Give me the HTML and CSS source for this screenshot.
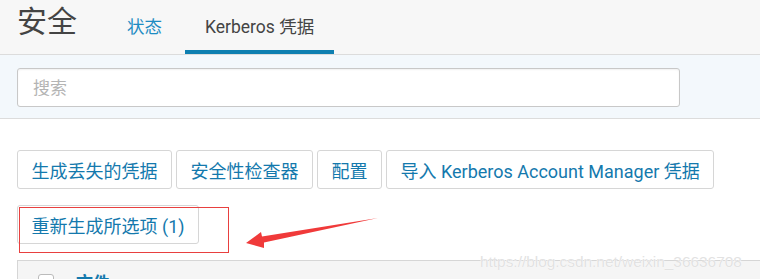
FILE: index.html
```html
<!DOCTYPE html>
<html lang="zh-CN">
<head>
    <meta charset="UTF-8">
    <meta name="viewport" content="width=device-width, initial-scale=1.0">
    <title>安全</title>
    <link rel="stylesheet" href="styles.css">
</head>
<body>
    <div class="header">
        <div class="page-title">安全</div>
        <div class="tabs">
            <div class="tab">状态</div>
            <div class="tab active">Kerberos 凭据</div>
        </div>
    </div>

    <div class="search-bar">
        <input class="search-input" type="text" placeholder="搜索">
    </div>

    <div class="toolbar">
        <div class="btn-row">
            <button class="btn">生成丢失的凭据</button>
            <button class="btn">安全性检查器</button>
            <button class="btn">配置</button>
            <button class="btn">导入 Kerberos Account Manager 凭据</button>
        </div>
        <div class="btn-row second">
            <button class="btn">重新生成所选项 (1)</button>
        </div>
    </div>

    <div class="table-head">
        <span class="checkbox"></span>
        <span class="col-name">文件</span>
    </div>

    <!-- 标注 -->
    <div class="mark-box"></div>
    <svg class="mark-arrow" width="760" height="279" viewBox="0 0 760 279">
        <polygon points="246,243 261,232 262,236.5 378,218 264,242.5 264,248" fill="#f03a3a"></polygon>
    </svg>
    <div class="watermark">https://blog.csdn.net/weixin_36636708</div>
</body>
</html>
```

FILE: styles.css
```css
:root {
    --blue: #1479ad;
    --tab-blue: #1d8cc3;
    --border: #d6d6d6;
    --radius: 3px;
}
body {
    margin: 0;
    background: #fff;
    color: #333;
    font-family: Roboto, "Noto Sans CJK SC", sans-serif;
    overflow: hidden;
    position: relative;
    height: 279px;
}
.header {
    display: flex;
    height: 54px;
    padding-left: 17px;
    background: #f7f7f7;
    border-bottom: 1px solid #dcdcdc;
}
.page-title {
    font-size: 30px;
    line-height: 44px;
    color: #444;
}
.tabs {
    display: flex;
    gap: 3px;
    margin-left: 30px;
}
.tab {
    padding: 4px 20px 0;
    font-size: 17.5px;
    line-height: 46px;
    color: var(--tab-blue);
    border-bottom: 4px solid transparent;
}
.tab.active {
    color: #444;
    border-bottom-color: #0e7fb1;
}
.search-bar {
    padding: 13px 17px 11px;
    background: #f3f8fc;
    border-bottom: 1px solid #dcdcdc;
}
.search-input {
    display: block;
    box-sizing: border-box;
    width: 663px;
    height: 39px;
    padding: 0 15px;
    border: 1px solid #c8c8c8;
    border-radius: var(--radius);
    box-shadow: inset 0 1px 2px rgba(0,0,0,0.06);
    font-family: inherit;
    font-size: 17px;
    outline: none;
}
.search-input::placeholder {
    color: #b4b4b4;
}
.toolbar {
    padding: 31px 17px 0;
}
.btn-row {
    display: flex;
    gap: 4px;
}
.btn-row.second {
    margin-top: 16px;
}
.btn {
    height: 39px;
    padding: 0 13.5px;
    background: #fff;
    border: 1px solid var(--border);
    border-radius: var(--radius);
    color: var(--blue);
    font-family: inherit;
    font-size: 18px;
    cursor: pointer;
}
.table-head {
    display: flex;
    align-items: flex-start;
    height: 19px;
    margin: 16px 0 0 17px;
    padding-top: 13px;
    background: #f5f5f5;
    border-top: 1px solid var(--border);
    border-left: 1px solid var(--border);
    box-sizing: border-box;
    overflow: hidden;
}
.checkbox {
    flex: none;
    width: 14px;
    height: 14px;
    margin: 0 0 0 20px;
    background: #fff;
    border: 1px solid #bbb;
    border-radius: 3px;
}
.col-name {
    margin-left: 22px;
    margin-top: -1px;
    font-size: 17px;
    line-height: 20px;
    font-weight: bold;
    color: var(--blue);
}
.mark-box {
    position: absolute;
    left: 19px;
    top: 207px;
    width: 208px;
    height: 44px;
    border: 1px solid #e8403f;
}
.mark-arrow {
    position: absolute;
    left: 0;
    top: 0;
}
.watermark {
    position: absolute;
    left: 480px;
    top: 253px;
    font-family: "Liberation Sans", Arial, sans-serif;
    font-size: 15.4px;
    color: #e2e2e2;
    text-shadow: 0 0 1px #fff, 0 0 1px #fff;
}
```
